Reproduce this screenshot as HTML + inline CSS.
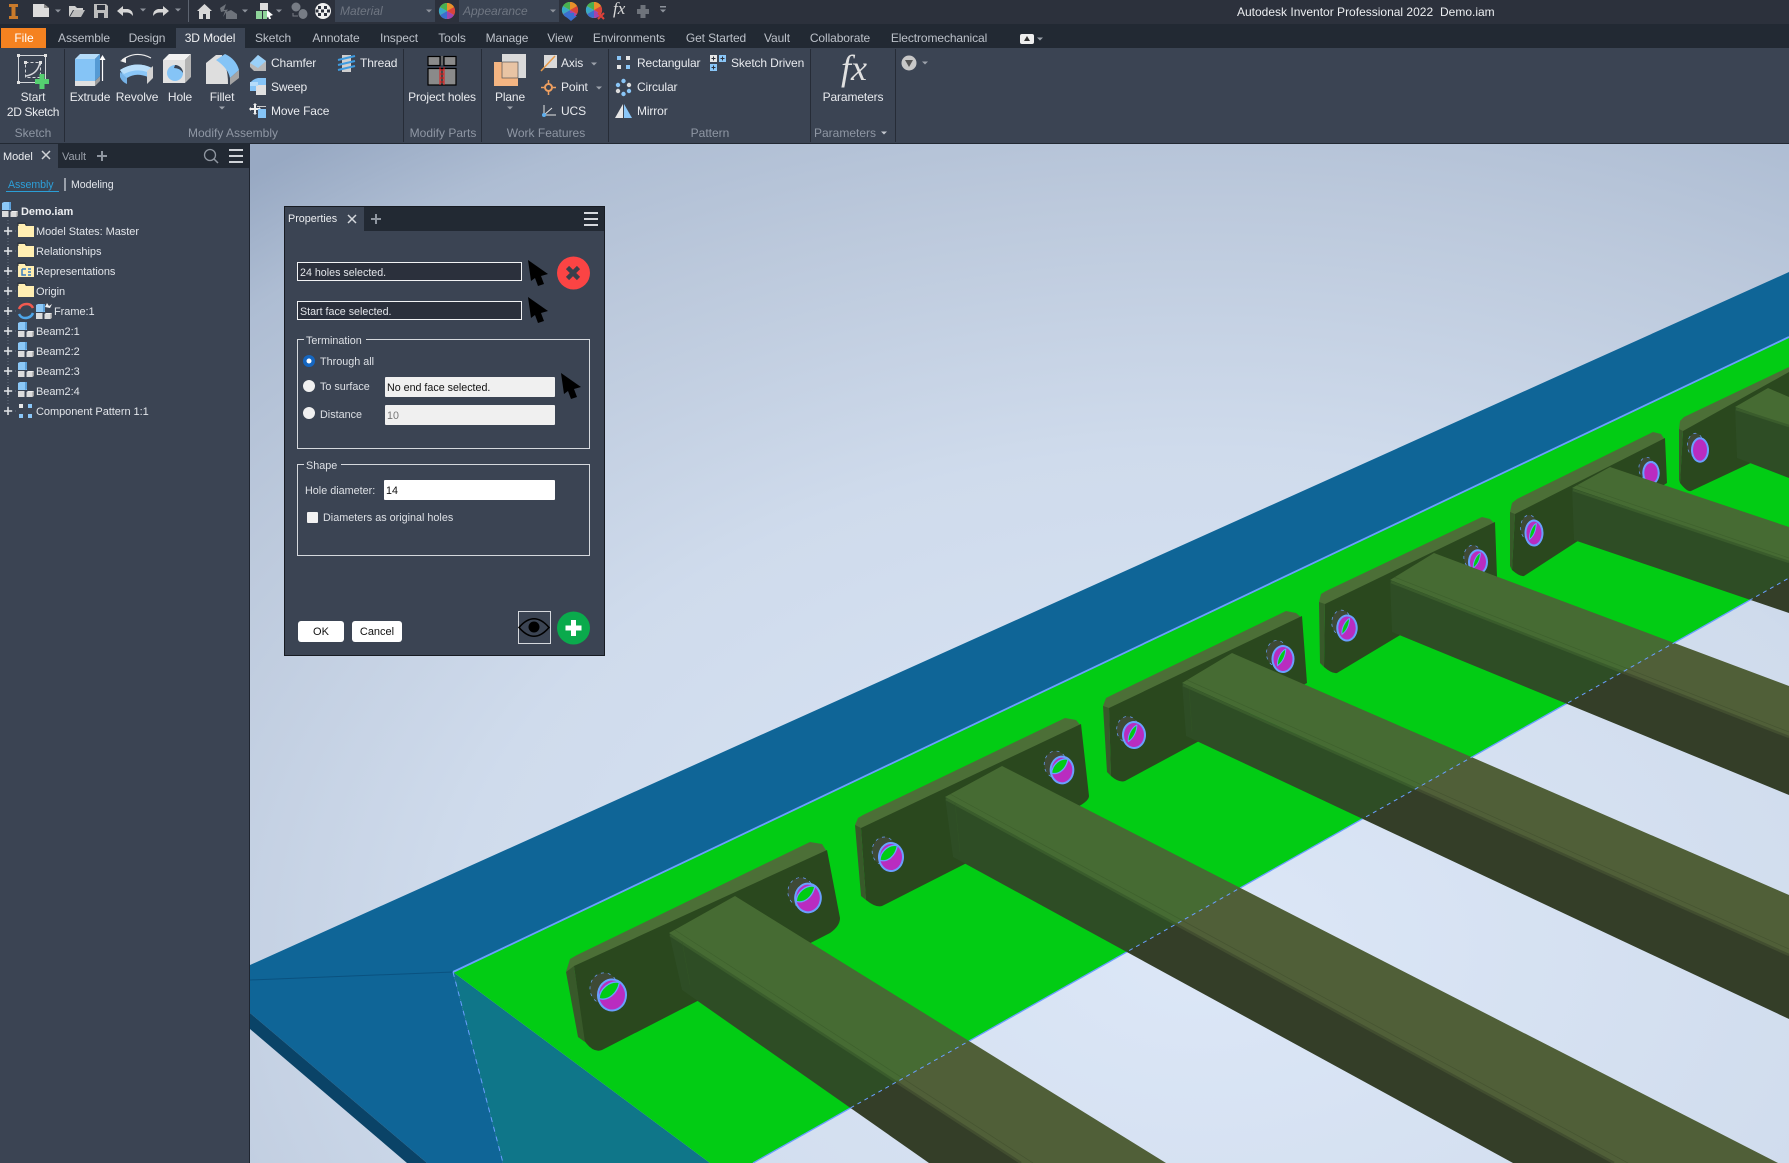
<!DOCTYPE html>
<html><head><meta charset="utf-8"><title>Autodesk Inventor Professional 2022</title>
<style>
html,body{margin:0;padding:0;background:#3b4453}
body{position:relative;width:1789px;height:1163px;overflow:hidden;font-family:"Liberation Sans",sans-serif;font-size:12px;color:#e6e8ec}
.b{position:absolute}
svg.a{position:absolute;left:0;top:0}
.t{position:absolute;line-height:16px;white-space:nowrap;margin-top:-8px}
.c{transform:translateX(-50%)}
.tab{color:#bcc1c9;letter-spacing:-.1px}
.lab{color:#e8eaee;letter-spacing:-.12px}
.grp{color:#8f97a4}
.tr{font-size:11px;color:#e2e5ea;margin-top:-7px;letter-spacing:-.05px}
.d{font-size:10.8px;color:#dde0e5;margin-top:-7px}
.f{position:absolute;box-sizing:border-box;font-size:10.7px;line-height:16px;white-space:nowrap;padding-left:2px}
</style></head><body>

<svg class="a" width="1789" height="1163" viewBox="0 0 1789 1163">
<defs>
<radialGradient id="bg" gradientUnits="userSpaceOnUse" cx="0" cy="0" r="1" gradientTransform="translate(1200 950) scale(1500 1000)">
<stop offset="0" stop-color="#dce7f7"/><stop offset=".5" stop-color="#cfdbec"/><stop offset=".75" stop-color="#bcc9dc"/><stop offset=".9" stop-color="#aebdd3"/><stop offset="1.05" stop-color="#98a9c3"/>
</radialGradient>
<clipPath id="gc"><polygon points="453,972 1789,337 1789,578 753,1163 710,1163"/></clipPath>
<g id="back" transform="rotate(12)"><ellipse cx="-.65" cy="-.3" rx="1" ry="1" fill="#3e4a36" stroke="#6a9fff" stroke-width=".7" stroke-dasharray="3 4" vector-effect="non-scaling-stroke"/><ellipse rx="1" ry="1" fill="#b92cc0"/></g>
<g id="h"><use href="#back"/><g transform="rotate(12)">
<path d="M-.85 .42C-.95 -.2 -.35 -.9 .35 -.9C.35 -.15 -.2 .45 -.85 .42Z" fill="#00cc14" stroke="#6a9fff" stroke-width="1.3" vector-effect="non-scaling-stroke"/>
<ellipse rx="1" ry="1" fill="none" stroke="#6a9fff" stroke-width="2" vector-effect="non-scaling-stroke"/></g></g>
<g id="h2"><use href="#back"/><g transform="rotate(12)">
<path d="M-.4 .6C-.6 .1 -.25 -.6 .1 -.8C.2 -.2 -.05 .3 -.4 .6Z" fill="#00cc14" stroke="#6a9fff" stroke-width="1" vector-effect="non-scaling-stroke"/>
<ellipse rx="1" ry="1" fill="none" stroke="#6a9fff" stroke-width="2" vector-effect="non-scaling-stroke"/></g></g>
<g id="h3"><use href="#back"/><g transform="rotate(12)">
<ellipse rx="1" ry="1" fill="none" stroke="#6a9fff" stroke-width="2" vector-effect="non-scaling-stroke"/></g></g>
</defs>
<rect x="250" y="144" width="1539" height="1019" fill="url(#bg)"/>
<!-- blue plate -->
<polygon points="250,965 1789,272 1789,337 453,972 503,1163 427,1163 250,1013" fill="#0f6597"/>
<polygon points="250,1013 427,1163 407,1163 250,1029" fill="#0a4367"/>
<line x1="250" y1="980" x2="453" y2="972" stroke="#0a5280" stroke-width="1"/>
<polygon points="453,972 503,1163 710,1163" fill="#0f7689"/>
<line x1="453" y1="972" x2="503" y2="1163" stroke="#6a9fff" stroke-width="1" stroke-dasharray="5 5"/>
<!-- green plate -->
<polygon points="453,972 1789,337 1789,578 753,1163 710,1163" fill="#02cc14"/>
<line x1="453" y1="972" x2="1789" y2="337" stroke="#6a9fff" stroke-width="1.8"/>
<line x1="753" y1="1163" x2="1789" y2="578" stroke="#6a9fff" stroke-width="1.3"/>

<!-- plates: top band + face -->
<g fill="#4c6f37">
<polygon points="566,972 570,959 577,955 810,842 822,844 827,852 574,968"/>
<polygon points="855,825 858,818 863,815 1065,718 1076,720 1081,726 861,830"/>
<polygon points="1103,706 1106,698 1112,695 1286,611 1296,613 1302,618 1109,710"/>
<polygon points="1319,602 1321,594 1326,591 1482,517 1490,519 1495,524 1325,606"/>
<polygon points="1510,512 1512,503 1517,499 1653,432 1661,434 1665,440 1515,516"/>
<polygon points="1679,429 1680,421 1684,417 1789,367 1789,374 1683,433"/>
</g>
<g fill="#2a481e">
<path d="M574 966L827 850L840 918Q840 926 830 933L602 1050Q594 1053 586 1043L584 1040Z"/>
<path d="M861 828L1081 724L1089 796Q1089 800 1081 805L882 906Q876 908 866 900Z"/>
<path d="M1109 708L1302 616L1307 683L1125 781Q1119 783 1111 776Z"/>
<path d="M1325 604L1495 522L1497 577L1337 673Q1332 674 1324 667Z"/>
<path d="M1515 514L1665 438L1667 483L1524 576Q1520 577 1512 570Z"/>
<path d="M1683 431L1789 372L1789 445L1691 491Q1687 492 1680 483Z"/>
</g>
<g fill="#38592a">
<polygon points="566,972 574,966 585,1042 578,1037"/>
<polygon points="855,825 861,828 866,900 861,896"/>
<polygon points="1103,706 1109,708 1111,776 1107,772"/>
<polygon points="1319,602 1325,604 1324,667 1320,663"/>
<polygon points="1510,512 1515,514 1512,570 1510,566"/>
<polygon points="1679,429 1683,431 1680,483 1679,480"/>
</g>
<!-- holes -->
<use href="#h" transform="translate(612 995) scale(14 15.5)"/>
<use href="#h" transform="translate(808 898) scale(12.8 14.3)"/>
<use href="#h" transform="translate(891 857) scale(12 14)"/>
<use href="#h" transform="translate(1062 770) scale(11.3 13.3)"/>
<use href="#h2" transform="translate(1134 735) scale(11 13)"/>
<use href="#h2" transform="translate(1283 659) scale(10.5 13)"/>
<use href="#h2" transform="translate(1347 628) scale(9.7 12.5)"/>
<use href="#h2" transform="translate(1478 562) scale(9 11.7)"/>
<use href="#h2" transform="translate(1534 533) scale(8.5 12.5)"/>
<use href="#h3" transform="translate(1651 473) scale(7.7 11)"/>
<use href="#h3" transform="translate(1700 450) scale(8 11.7)"/>

<!-- beams -->
<g fill="#505f38">
<polygon points="669,933 735,896 1166,1163 1021,1163"/>
<polygon points="945,797 1002,766 1778,1163 1614,1163"/>
<polygon points="1182,683 1232,653 1789,895 1789,955"/>
<polygon points="1390,580 1434,553 1789,686 1789,737"/>
<polygon points="1572,488 1610,467 1789,527 1789,562"/>
<polygon points="1735,407 1768,388 1789,397 1789,426"/>
</g>
<g fill="#343e28">
<polygon points="669,933 1021,1163 929,1163 682,990"/>
<polygon points="945,797 1614,1163 1513,1163 953,857"/>
<polygon points="1182,683 1789,955 1789,1019 1186,736"/>
<polygon points="1390,580 1789,737 1789,795 1392,632"/>
<polygon points="1572,488 1789,562 1789,613 1574,540"/>
<polygon points="1735,407 1789,426 1789,478 1737,458"/>
</g>
<g stroke="#424e30" stroke-width="2.5" fill="none">
<line x1="670" y1="935" x2="1021" y2="1163"/>
<line x1="946" y1="799" x2="1614" y2="1163"/>
<line x1="1183" y1="685" x2="1789" y2="955"/>
<line x1="1391" y1="582" x2="1789" y2="737"/>
<line x1="1573" y1="490" x2="1789" y2="562"/>
<line x1="1736" y1="409" x2="1789" y2="426"/>
</g>
<g stroke="#3c4a2a" stroke-width=".7" stroke-opacity=".5" fill="none">
<line x1="675" y1="930" x2="1033" y2="1163"/>
<line x1="950" y1="794" x2="1628" y2="1163"/>
<line x1="1187" y1="680" x2="1789" y2="949"/>
<line x1="1394" y1="577" x2="1789" y2="732"/>
<line x1="1576" y1="485" x2="1789" y2="558"/>
<line x1="682" y1="941" x2="690" y2="985"/>
<line x1="955" y1="803" x2="960" y2="852"/>
<line x1="1189" y1="687" x2="1192" y2="732"/>
</g>
<g clip-path="url(#gc)" fill="rgba(0,204,20,.115)">
<polygon points="669,933 735,896 1166,1163 929,1163 682,990"/>
<polygon points="945,797 1002,766 1778,1163 1513,1163 953,857"/>
<polygon points="1182,683 1232,653 1789,895 1789,1019 1186,736"/>
<polygon points="1390,580 1434,553 1789,686 1789,795 1392,632"/>
<polygon points="1572,488 1610,467 1789,527 1789,613 1574,540"/>
<polygon points="1735,407 1768,388 1789,397 1789,478 1737,458"/>
</g>
<line x1="753" y1="1163" x2="1789" y2="578" stroke="#6a9fff" stroke-width="1" stroke-dasharray="4 4"/>
</svg>

<!-- chrome panels -->
<div class="b" style="left:0;top:0;width:1789px;height:24px;background:#2c313c"></div>
<div class="b" style="left:0;top:24px;width:1789px;height:24px;background:#222933"></div>
<div class="b" style="left:1px;top:28px;width:45px;height:20px;background:#f58220"></div>
<div class="b" style="left:176px;top:28px;width:69px;height:20px;background:#3b4453"></div>
<div class="b" style="left:0;top:48px;width:1789px;height:95px;background:#3b4453"></div>
<div class="b" style="left:0;top:143px;width:1789px;height:1px;background:#222933"></div>
<div class="b" style="left:335px;top:0;width:100px;height:22px;background:#3b4453"></div>
<div class="b" style="left:459px;top:0;width:100px;height:22px;background:#3b4453"></div>
<div class="b" style="left:188px;top:0;width:1px;height:22px;background:#5d6470"></div>
<div class="b" style="left:64px;top:49px;width:1px;height:93px;background:#262c37"></div>
<div class="b" style="left:403px;top:49px;width:1px;height:93px;background:#262c37"></div>
<div class="b" style="left:481px;top:49px;width:1px;height:93px;background:#262c37"></div>
<div class="b" style="left:608px;top:49px;width:1px;height:93px;background:#262c37"></div>
<div class="b" style="left:810px;top:49px;width:1px;height:93px;background:#262c37"></div>
<div class="b" style="left:895px;top:49px;width:1px;height:93px;background:#262c37"></div>
<!-- browser -->
<div class="b" style="left:0;top:144px;width:249px;height:1019px;background:#3b4453"></div>
<div class="b" style="left:249px;top:144px;width:1px;height:1019px;background:#1f2530"></div>
<div class="b" style="left:58px;top:144px;width:191px;height:24px;background:#222933"></div>
<div class="b" style="left:6px;top:191px;width:53px;height:1px;background:#2b9fd6"></div>
<div class="b" style="left:64px;top:178px;width:2px;height:13px;background:#9aa0aa"></div>
<!-- dialog -->
<div class="b" style="left:284px;top:206px;width:321px;height:450px;box-sizing:border-box;background:#3b4453;border:1px solid #171b22"></div>
<div class="b" style="left:285px;top:207px;width:319px;height:24px;background:#222933"></div>
<div class="b" style="left:285px;top:207px;width:79px;height:24px;background:#3b4453"></div>
<div class="b" style="left:297px;top:339px;width:293px;height:110px;box-sizing:border-box;border:1px solid #d5d8dd"></div>
<div class="b" style="left:297px;top:464px;width:293px;height:92px;box-sizing:border-box;border:1px solid #d5d8dd"></div>
<div class="b" style="left:304px;top:336px;width:62px;height:6px;background:#3b4453"></div>
<div class="b" style="left:304px;top:461px;width:37px;height:6px;background:#3b4453"></div>

<div class="f" style="left:297px;top:262px;width:225px;height:19px;background:#2b303c;border:1.5px solid #f2f3f5;color:#e4e6ea;padding-top:1.500px">24 holes selected.</div>
<div class="f" style="left:297px;top:301px;width:225px;height:19px;background:#2b303c;border:1.5px solid #f2f3f5;color:#e4e6ea;padding-top:1.500px">Start face selected.</div>
<div class="f" style="left:385px;top:377px;width:170px;height:20px;background:#f0f0f0;color:#111;padding-top:3px;border-radius:1px">No end face selected.</div>
<div class="f" style="left:385px;top:405px;width:170px;height:20px;background:#f0f0f0;color:#777;padding-top:3px;border-radius:1px">10</div>
<div class="f" style="left:384px;top:480px;width:171px;height:20px;background:#fff;color:#111;padding-top:2.500px;border-radius:1px">14</div>
<div class="f" style="left:298px;top:621px;width:46px;height:21px;background:#fff;color:#111;text-align:center;padding:3px 0 0;border-radius:3px;font-size:11px">OK</div>
<div class="f" style="left:352px;top:621px;width:50px;height:21px;background:#fff;color:#111;text-align:center;padding:3px 0 0;border-radius:3px;font-size:11px">Cancel</div>
<div class="b" style="left:518px;top:611px;width:33px;height:33px;box-sizing:border-box;border:1px solid #d5d8dd"></div>
<div class="b" style="left:307px;top:512px;width:11px;height:11px;background:#f2f2f2;border-radius:1px"></div>

<!-- icons -->
<svg class="a" width="1789" height="1163" viewBox="0 0 1789 1163" style="pointer-events:none">
<defs>
<path id="ar" d="M-3 -1.5H3L0 1.5Z"/>
<g id="asm"><path d="M0 1L2 0H9V8H0Z" fill="#8cc8f7"/><path d="M7 0H9V7L7 8Z" fill="#5c9fd8"/><rect x="0" y="9" width="6.500" height="6" fill="#dcdcdc"/><rect x="8.500" y="10" width="6" height="5" fill="#dcdcdc"/><path d="M14.500 10L16 9V14L14.500 15Z" fill="#9e9e9e"/><path d="M8.500 10L10 9H16L14.500 10Z" fill="#f0f0f0"/></g>
<g id="fo"><path d="M0 2H7L8 4H16V15H0Z" fill="#ffeeb2"/><path d="M0 4V1H7L8 3.500" fill="none" stroke="#2a2f38" stroke-width="1"/></g>
<path id="cur" d="M0 0L20 14L13 16L16 24L10 26L7 18L3 21Z" fill="#000"/>
<g id="wheel"><circle r="8" fill="#f2c430"/><path d="M0 0L0 -8A8 8 0 0 1 7 -4Z" fill="#e8902a"/><path d="M0 0L7 -4A8 8 0 0 1 7 4Z" fill="#d9443a"/><path d="M0 0L7 4A8 8 0 0 1 0 8Z" fill="#a044b0"/><path d="M0 0L0 8A8 8 0 0 1 -7 4Z" fill="#3a6fd0"/><path d="M0 0L-7 4A8 8 0 0 1 -7 -4Z" fill="#38a8c8"/><path d="M0 0L-7 -4A8 8 0 0 1 0 -8Z" fill="#48b050"/></g>
</defs>

<!-- QAT -->
<path d="M9 4H18V7H15.500V16H18V19H9V16H11.500V7H9Z" fill="#c97a2b"/>
<path d="M33 4H44L49 8V17H33Z" fill="#dcdcdc"/><path d="M44 4V8H49Z" fill="#8c8c8c"/>
<path d="M69 6H75L77 8H83V10H73L69 17Z" fill="#cfcfcf"/><path d="M74 10H85L81 17H70Z" fill="#bdbdbd"/>
<path d="M94 4H106L108 6V18H94Z" fill="#bdbdbd"/><rect x="97" y="5" width="8" height="5" fill="#2c313c"/><rect x="98" y="13" width="6" height="5" fill="#2c313c"/>
<path d="M117 11L123 6V9H128Q133 10 133 16Q130 12 126 12.500H123V16Z" fill="#d6d6d6"/>
<path d="M169 11L163 6V9H158Q153 10 153 16Q156 12 160 12.500H163V16Z" fill="#d6d6d6"/>
<g fill="#8d929b"><use href="#ar" x="58" y="11"/><use href="#ar" x="143" y="10"/><use href="#ar" x="178" y="10"/><use href="#ar" x="245" y="11"/><use href="#ar" x="279" y="11"/><use href="#ar" x="429" y="11"/><use href="#ar" x="553" y="11"/><use href="#ar" x="663" y="11"/></g>
<rect x="660" y="6" width="6" height="1.500" fill="#8d929b"/>
<path d="M204.500 4L212 11H210V19H206V14H203V19H199V11H197Z" fill="#d8d8d8"/>
<path d="M220 8L226 4L224 10L228 9.500L223 17L225 11L221 12Z" fill="#6e737b"/><path d="M226 12L231 10L237 14V19H226Z" fill="#6e737b"/>
<rect x="260" y="3" width="8" height="7" fill="#dcdcdc"/><rect x="256" y="11" width="6" height="8" fill="#8fd49a"/><rect x="263" y="11" width="4" height="8" fill="#8fd49a"/><path d="M267 10L273 15L270 16L271 19L269 19L268 16.500L267 18Z" fill="#fff"/>
<circle cx="296" cy="7" r="4.500" fill="#777c85"/><ellipse cx="303" cy="14" rx="4.500" ry="5" fill="#777c85"/><path d="M293 13V16H298" stroke="#777c85" fill="none"/>
<circle cx="323" cy="11" r="8" fill="#f0f0f0"/>
<g fill="#2c313c"><rect x="318" y="6" width="3" height="3"/><rect x="324" y="6" width="3" height="3"/><rect x="321" y="9.500" width="3" height="3"/><rect x="327" y="9.500" width="3" height="3"/><rect x="315.500" y="9.500" width="3" height="3"/><rect x="318" y="13" width="3" height="3"/><rect x="324" y="13" width="3" height="3"/></g>
<use href="#wheel" x="447" y="11"/>
<use href="#wheel" x="570" y="10"/><path d="M568 13H574V16H577L571 21L565 16H568Z" fill="#3a6fd0"/>
<use href="#wheel" x="594" y="10"/><path d="M598 13L604 19M604 13L598 19" stroke="#e04038" stroke-width="2"/>
<path d="M640.500 5H645.500V9H649V14H645.500V18H640.500V14H637V9H640.500Z" fill="#6e737b"/>

<!-- Start 2D sketch -->
<g fill="none" stroke="#d4d6da"><rect x="18.500" y="55.500" width="27" height="27"/><rect x="25.500" y="62.500" width="15" height="15" stroke-dasharray="3 2"/><path d="M26 76Q38 74 40 62" stroke-width="1.500"/></g>
<g fill="#e2e2e2"><rect x="17" y="54" width="3" height="3"/><rect x="44" y="54" width="3" height="3"/><rect x="17" y="81" width="3" height="3"/><rect x="24" y="61" width="3" height="3"/><rect x="39" y="61" width="3" height="3"/></g>
<path d="M39.500 74H44.500V79H49V84H44.500V89H39.500V84H35V79H39.500Z" fill="#55cf70"/>
<!-- Extrude -->
<path d="M75 81H95V86H75Z" fill="#e0e0e0"/><path d="M95 81L100 76V81L95 86Z" fill="#9c9c9c"/>
<path d="M75 59H95V81H75Z" fill="#85c4f6"/><path d="M75 59L80 54H100L95 59Z" fill="#b5dcf9"/><path d="M95 59L100 54V76L95 81Z" fill="#559ad4"/>
<path d="M102.500 59V81" stroke="#fff" stroke-width="1.200"/><path d="M99.500 60L102.500 55L105.500 60Z" fill="#fff"/>
<!-- Revolve -->
<path d="M120 70Q136 60 152 68L148 77Q136 72 127 78V83Z" fill="#8ac6f7"/><path d="M120 70Q136 60 152 68L147 72Q136 68 124 74Z" fill="#b9defa"/>
<path d="M120 72L127 78V84Q122 82 120 77Z" fill="#76b2e6"/><path d="M147 71L153 66V78L147 84Z" fill="#d2d2d2"/>
<path d="M122 60Q136 50 151 58" fill="none" stroke="#eee" stroke-width="1.200"/><path d="M120 61L126 58L126 63Z" fill="#eee"/>
<!-- Hole -->
<path d="M163 60H185V83H163Z" fill="#e2e2e2"/><path d="M163 60L169 54H191L185 60Z" fill="#f2f2f2"/><path d="M185 60L191 54V77L185 83Z" fill="#b4b4b4"/>
<circle cx="175" cy="73" r="8" fill="#85c4f6"/><path d="M175 65A8 8 0 0 1 183 73Q180 68 174 68Z" fill="#3b4453"/>
<!-- Fillet -->
<path d="M206 63L216 55H222Q222 62 226 68Q228 74 228 84H206Z" fill="#dedede"/>
<path d="M216 60L225 54Q236 59 239 70L230 78Q228 68 216 60Z" fill="#85c4f6"/><path d="M230 78L239 70V78L230 85Z" fill="#a4a4a4"/>
<!-- Chamfer -->
<path d="M250 63L258 55L266 61L266 71H254L250 67Z" fill="#b8b8b8"/><path d="M250 63L258 55L266 61L258 68Z" fill="#9ad0f8"/>
<!-- Sweep -->
<path d="M250 85Q250 80 258 78H266V85H258V91H250Z" fill="#85c4f6"/><rect x="256" y="85" width="10" height="10" fill="#e0e0e0"/><rect x="250" y="82" width="8" height="4" fill="#b5dcf9"/>
<!-- Move Face -->
<path d="M255 103L257 105H256V108H259V107L261 109L259 111V110H256V113H257L255 115L253 113H254V110H251V111L249 109L251 107V108H254V105H253Z" fill="#eee"/><rect x="257" y="106" width="9" height="1" fill="#ccc"/><rect x="258" y="109" width="8" height="9" fill="#85c4f6"/>
<!-- Thread -->
<rect x="342" y="55" width="9" height="17" fill="#cfcfcf"/><path d="M338 60L355 56M338 65L355 61M338 70L355 66" stroke="#3f9ce0" stroke-width="2"/>
<!-- Project holes -->
<g stroke="#000" stroke-width="1.200" fill="#8a8a8a"><rect x="428" y="56.500" width="12" height="9"/><rect x="444" y="56.500" width="12" height="9"/><rect x="428" y="68.500" width="28" height="16.500"/></g>
<rect x="441" y="56" width="2" height="9" fill="#666"/><line x1="442" y1="68" x2="442" y2="85" stroke="#000" stroke-width="1"/>
<path d="M440 67V85M444 67V85M440 70H444M440 74H444M440 78H444M440 82H444" stroke="#e01818" stroke-width="1" fill="none"/>
<!-- Plane -->
<rect x="502" y="54" width="24" height="24" fill="#dadada"/><rect x="494" y="62" width="24" height="24" fill="#f4b582"/><rect x="502" y="62" width="16" height="16" fill="#e8c4a4" stroke="#555" stroke-width=".7"/>
<!-- Axis/Point/UCS -->
<rect x="544" y="55" width="13" height="13" fill="#dadada"/><line x1="541" y1="71" x2="555" y2="56" stroke="#e89a4a" stroke-width="1.500"/>
<path d="M548.500 80V84M548.500 91V95M541 87.500H544M553 87.500H556" stroke="#f0a060" stroke-width="1.500"/><circle cx="548.500" cy="87.500" r="3.500" fill="none" stroke="#f0a060" stroke-width="2"/>
<path d="M544 105V115H556M544 115L552 108" fill="none" stroke="#e6e6e6" stroke-width="1"/><circle cx="544" cy="115" r="2" fill="#5fb0ef"/>
<g fill="#9ca2ab"><use href="#ar" x="594" y="64"/><use href="#ar" x="599" y="88"/><use href="#ar" x="510" y="108"/><use href="#ar" x="222" y="108"/><use href="#ar" x="884" y="133" fill="#c4c8cf"/><use href="#ar" x="925" y="63"/><use href="#ar" x="1040" y="39"/></g>
<!-- pattern icons -->
<g fill="#8ac6f7"><rect x="617" y="56" width="4" height="4"/><rect x="626" y="56" width="4" height="4" fill="#e6e6e6"/><rect x="617" y="65" width="4" height="4" fill="#e6e6e6"/><rect x="626" y="65" width="4" height="4"/>
<circle cx="623.500" cy="81" r="2.200"/><circle cx="629" cy="85" r="2.200" fill="#dcdcdc"/><circle cx="629" cy="91" r="2.200"/><circle cx="623.500" cy="94" r="2.200"/><circle cx="618" cy="91" r="2.200" fill="#dcdcdc"/><circle cx="618" cy="85" r="2.200"/></g>
<path d="M615 118L623 104V118Z" fill="#e6e6e6"/><path d="M624 104L632 118H624Z" fill="#8ac6f7"/>
<g><rect x="710" y="55" width="7" height="7" fill="#e6e6e6"/><rect x="719" y="55" width="7" height="7" fill="#8ac6f7"/><rect x="710" y="64" width="7" height="7" fill="#8ac6f7"/><path d="M713.500 56.500V60.500M711.500 58.500H715.500M722.500 56.500V60.500M720.500 58.500H724.500M713.500 65.500V69.500M711.500 67.500H715.500" stroke="#2c313c"/></g>
<circle cx="909" cy="63" r="7.500" fill="#c8c8c8"/><path d="M905 60H913L909 67Z" fill="#555"/>
<rect x="1020" y="34" width="14" height="10" rx="2" fill="#eee"/><path d="M1027 36L1030 41H1024Z" fill="#333"/>

<!-- browser header icons -->
<path d="M42 151L50 159M50 151L42 159" stroke="#cfd2d7" stroke-width="1.500"/>
<path d="M102 151V161M97 156H107" stroke="#8f96a0" stroke-width="2"/>
<circle cx="210" cy="155" r="5.500" fill="none" stroke="#8f96a0" stroke-width="1.300"/><path d="M214 159L218 163" stroke="#8f96a0" stroke-width="1.500"/>
<path d="M229 150H243M229 156H243M229 162H243" stroke="#cfd2d7" stroke-width="2"/>
<!-- tree -->
<use href="#asm" x="2" y="202"/>
<path d="M8 220V411" stroke="#6a7280" stroke-dasharray="1 2" fill="none"/>
<g stroke="#6a7280" stroke-dasharray="1 2"><path d="M12 231H18M12 251H18M12 271H18M12 291H18M12 311H18M12 331H18M12 351H18M12 371H18M12 391H18M12 411H18"/></g>
<g stroke="#e4e6ea" stroke-width="1.500" fill="none"><path d="M4 231H12M8 227V235M4 251H12M8 247V255M4 271H12M8 267V275M4 291H12M8 287V295M4 311H12M8 307V315M4 331H12M8 327V335M4 351H12M8 347V355M4 371H12M8 367V375M4 391H12M8 387V395M4 411H12M8 407V415"/></g>
<use href="#fo" x="18" y="222"/><use href="#fo" x="18" y="242"/><use href="#fo" x="18" y="262"/><use href="#fo" x="18" y="282"/>
<path d="M22 269H26M22 269V275H26M28 269H31M28 272H31M28 275H31" stroke="#3a7fc0" stroke-width="1.500" fill="none"/>
<path d="M19 309Q21 304 27 304Q31 304 33 308" fill="none" stroke="#f05a50" stroke-width="2.500"/><path d="M33 313Q31 318 25 318Q21 318 19 314" fill="none" stroke="#4ea6ea" stroke-width="2.500"/>
<use href="#asm" x="36" y="304"/><path d="M47 303L49 306L52 304L50 308L45 307Z" fill="#f0f0f0"/>
<use href="#asm" x="18" y="322"/><use href="#asm" x="18" y="342"/><use href="#asm" x="18" y="362"/><use href="#asm" x="18" y="382"/>
<g fill="#e8e8e8"><rect x="19" y="404" width="4" height="4"/><rect x="19" y="414" width="4" height="4" fill="#8ac6f7"/></g><rect x="28" y="404" width="4" height="4" fill="#8ac6f7"/><rect x="28" y="414" width="4" height="4" fill="#8ac6f7"/>

<!-- dialog icons -->
<path d="M348 215L356 223M356 215L348 223" stroke="#d5d8dd" stroke-width="1.500"/>
<path d="M376 214V224M371 219H381" stroke="#8f96a0" stroke-width="2"/>
<path d="M584 213H598M584 219H598M584 225H598" stroke="#d5d8dd" stroke-width="2"/>
<use href="#cur" x="528" y="260"/><use href="#cur" x="528" y="297"/><use href="#cur" x="561" y="373"/>
<circle cx="573.500" cy="273" r="16.500" fill="#fb4444"/><path d="M567.500 267.500L578.500 278.500M578.500 267.500L567.500 278.500" stroke="#3a3f4b" stroke-width="4.500"/>
<circle cx="573.500" cy="628" r="16.500" fill="#0aaa4c"/><path d="M573.500 620V636M565.500 628H581.500" stroke="#fff" stroke-width="5"/>
<path d="M519 627.500Q534 610 549 627.500Q534 645 519 627.500Z" fill="none" stroke="#000" stroke-width="1.600"/><circle cx="534" cy="627" r="5.500" fill="#000"/>
<circle cx="309" cy="361" r="6" fill="#1566c0"/><circle cx="309" cy="361" r="2.500" fill="#fff"/>
<circle cx="309" cy="386" r="6" fill="#f0f0f0"/><circle cx="309" cy="413" r="6" fill="#f0f0f0"/>
</svg>

<!-- text -->
<span class="t" style="left:1237px;top:12px;color:#eceef1">Autodesk Inventor Professional 2022</span>
<span class="t" style="left:1440px;top:12px;color:#eceef1">Demo.iam</span>
<span class="t" style="left:340px;top:11px;font-style:italic;color:#6f7682">Material</span>
<span class="t" style="left:463px;top:11px;font-style:italic;color:#6f7682">Appearance</span>
<span class="t" style="left:613px;top:9px;font-family:'Liberation Serif',serif;font-style:italic;font-size:17px;color:#d8d8d8">fx</span>

<span class="t c" style="left:24px;top:38px;color:#fff">File</span>
<span class="t c tab" style="left:84px;top:38px">Assemble</span>
<span class="t c tab" style="left:147px;top:38px">Design</span>
<span class="t c" style="left:210px;top:38px;color:#f0f1f3;letter-spacing:-.1px">3D Model</span>
<span class="t c tab" style="left:273px;top:38px">Sketch</span>
<span class="t c tab" style="left:336px;top:38px">Annotate</span>
<span class="t c tab" style="left:399px;top:38px">Inspect</span>
<span class="t c tab" style="left:452px;top:38px">Tools</span>
<span class="t c tab" style="left:507px;top:38px">Manage</span>
<span class="t c tab" style="left:560px;top:38px">View</span>
<span class="t c tab" style="left:629px;top:38px">Environments</span>
<span class="t c tab" style="left:716px;top:38px">Get Started</span>
<span class="t c tab" style="left:777px;top:38px">Vault</span>
<span class="t c tab" style="left:840px;top:38px">Collaborate</span>
<span class="t c tab" style="left:939px;top:38px">Electromechanical</span>

<span class="t c lab" style="left:33px;top:97px">Start</span>
<span class="t c lab" style="left:33px;top:112px;letter-spacing:-.35px">2D Sketch</span>
<span class="t c lab" style="left:90px;top:97px">Extrude</span>
<span class="t c lab" style="left:137px;top:97px">Revolve</span>
<span class="t c lab" style="left:180px;top:97px">Hole</span>
<span class="t c lab" style="left:222px;top:97px">Fillet</span>
<span class="t lab" style="left:271px;top:63px">Chamfer</span>
<span class="t lab" style="left:271px;top:87px">Sweep</span>
<span class="t lab" style="left:271px;top:111px">Move Face</span>
<span class="t lab" style="left:360px;top:63px">Thread</span>
<span class="t c lab" style="left:442px;top:97px">Project holes</span>
<span class="t c lab" style="left:510px;top:97px">Plane</span>
<span class="t lab" style="left:561px;top:63px">Axis</span>
<span class="t lab" style="left:561px;top:87px">Point</span>
<span class="t lab" style="left:561px;top:111px">UCS</span>
<span class="t lab" style="left:637px;top:63px">Rectangular</span>
<span class="t lab" style="left:637px;top:87px">Circular</span>
<span class="t lab" style="left:637px;top:111px">Mirror</span>
<span class="t lab" style="left:731px;top:63px">Sketch Driven</span>
<span class="t c lab" style="left:853px;top:97px">Parameters</span>
<span class="t c" style="left:854px;top:68px;font-family:'Liberation Serif',serif;font-style:italic;font-size:36px;line-height:36px;margin-top:-18px;color:#e0e0e0">fx</span>
<span class="t c grp" style="left:33px;top:133px">Sketch</span>
<span class="t c grp" style="left:233px;top:133px">Modify Assembly</span>
<span class="t c grp" style="left:443px;top:133px">Modify Parts</span>
<span class="t c grp" style="left:546px;top:133px">Work Features</span>
<span class="t c grp" style="left:710px;top:133px">Pattern</span>
<span class="t c grp" style="left:845px;top:133px">Parameters</span>

<span class="t tr" style="left:3px;top:156px;color:#eceef1">Model</span>
<span class="t tr" style="left:62px;top:156px;color:#9aa0aa">Vault</span>
<span class="t tr" style="left:8px;top:184px;color:#2d9fd9;font-size:10.6px">Assembly</span>
<span class="t tr" style="left:71px;top:184px;font-size:10.6px">Modeling</span>
<span class="t tr" style="left:21px;top:211px;font-weight:bold;color:#eceef1">Demo.iam</span>
<span class="t tr" style="left:36px;top:231px">Model States: Master</span>
<span class="t tr" style="left:36px;top:251px">Relationships</span>
<span class="t tr" style="left:36px;top:271px">Representations</span>
<span class="t tr" style="left:36px;top:291px">Origin</span>
<span class="t tr" style="left:54px;top:311px">Frame:1</span>
<span class="t tr" style="left:36px;top:331px">Beam2:1</span>
<span class="t tr" style="left:36px;top:351px">Beam2:2</span>
<span class="t tr" style="left:36px;top:371px">Beam2:3</span>
<span class="t tr" style="left:36px;top:391px">Beam2:4</span>
<span class="t tr" style="left:36px;top:411px">Component Pattern 1:1</span>

<span class="t d" style="left:288px;top:218px;color:#eceef1">Properties</span>
<span class="t d" style="left:306px;top:340px">Termination</span>
<span class="t d" style="left:320px;top:361px">Through all</span>
<span class="t d" style="left:320px;top:386px">To surface</span>
<span class="t d" style="left:320px;top:414px">Distance</span>
<span class="t d" style="left:306px;top:465px">Shape</span>
<span class="t d" style="left:305px;top:490px">Hole diameter:</span>
<span class="t d" style="left:323px;top:517px">Diameters as original holes</span>
</body></html>
